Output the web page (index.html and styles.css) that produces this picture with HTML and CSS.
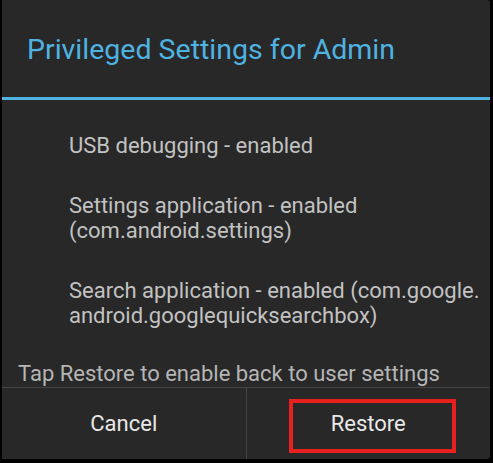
FILE: index.html
```html
<!DOCTYPE html>
<html>
<head>
<meta charset="utf-8">
<link rel="stylesheet" href="styles.css">
</head>
<body>
<div class="dialog">
  <div class="title">Privileged Settings for Admin</div>
  <div class="rule"></div>
  <div class="content">
    <ul class="items">
      <li>USB debugging - enabled</li>
      <li>Settings application - enabled<br>(com.android.settings)</li>
      <li>Search application - enabled (com.google.<br>android.googlequicksearchbox)</li>
    </ul>
    <p class="note">Tap Restore to enable back to user settings</p>
  </div>
  <div class="buttons">
    <button class="btn">Cancel</button>
    <button class="btn restore">Restore<span class="mark"></span></button>
  </div>
</div>
</body>
</html>
```
FILE: styles.css
```css
html, body {
  margin: 0;
  padding: 0;
  background: #000;
}
body {
  width: 493px;
  height: 463px;
  overflow: hidden;
  font-family: Roboto, "Noto Sans", sans-serif;
}
.dialog {
  width: 488px;
  height: 459px;
  margin-left: 2px;
  background: #282828;
  border-radius: 0 3px 3px 0;
  display: flex;
  flex-direction: column;
}
.title {
  height: 97px;
  box-sizing: border-box;
  padding: 34px 0 0 25px;
  font-size: 28.5px;
  line-height: 32px;
  color: #4fb3e2;
}
.rule {
  height: 3px;
  background: #4fb3e2;
}
.content {
  flex: 1;
  display: flex;
  flex-direction: column;
  justify-content: space-between;
  padding: 33px 0 1px 16px;
}
.items {
  list-style: none;
  margin: 0;
  padding: 0 0 0 51px;
  display: flex;
  flex-direction: column;
  gap: 35px;
  font-size: 22px;
  line-height: 25px;
  color: #c2c2c2;
}
.note {
  margin: 0;
  font-size: 22px;
  line-height: 25px;
  color: #b5b5b5;
}
.buttons {
  height: 71px;
  border-top: 1px solid #444;
  display: flex;
}
.btn {
  flex: 1;
  background: none;
  border: 0;
  padding: 0 0 1px;
  font-family: inherit;
  font-size: 22px;
  color: #e8e8e8;
  position: relative;
}
.btn + .btn {
  border-left: 1px solid #444;
}
.mark {
  position: absolute;
  left: 42px;
  top: 11px;
  width: 167px;
  height: 54px;
  box-sizing: border-box;
  border: 4px solid #e8211f;
}
```
